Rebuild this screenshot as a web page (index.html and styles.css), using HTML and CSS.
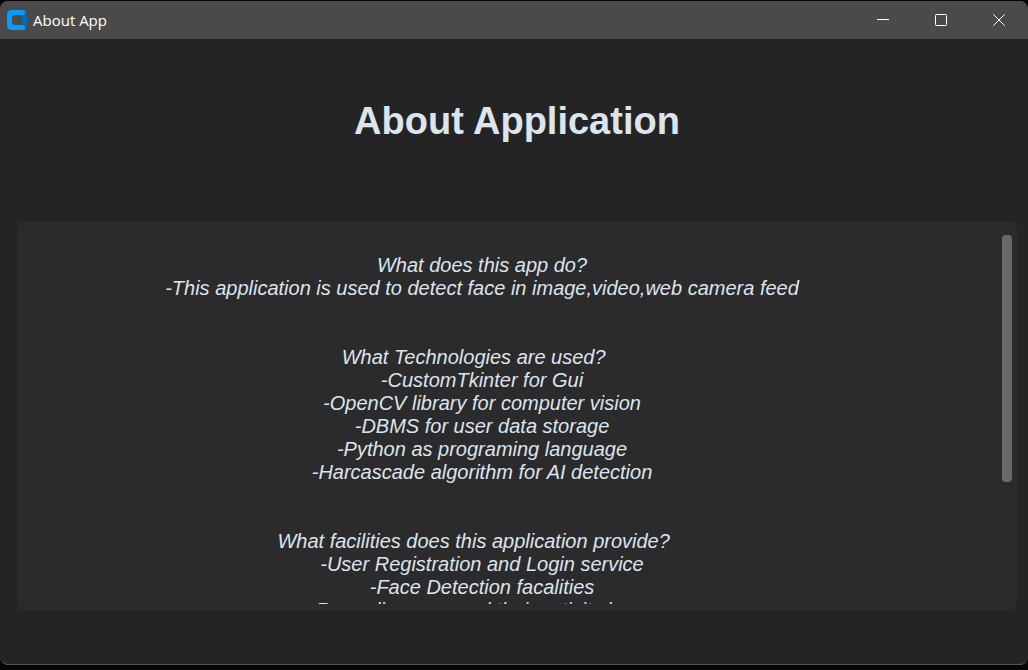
FILE: index.html
```html
<!DOCTYPE html>
<html lang="en">
<head>
<meta charset="utf-8">
<title>About App</title>
<link rel="stylesheet" href="styles.css">
</head>
<body>
<div class="window">
  <header class="titlebar">
    <svg class="logo" viewBox="0 0 20 20" aria-hidden="true">
      <path class="logo-shade" d="M12 0h4q4 0 4 4v12q0 4-4 4h-4l3-6V6z"/>
      <path class="logo-front" d="M5 0h10q3 0 3 2.5T15 5H8Q5 5 5 8v4q0 3 3 3h7q3 0 3 2.500T15 20H5q-5 0-5-5V5q0-5 5-5z"/>
    </svg>
    <span class="caption">About App</span>
    <div class="controls">
      <button class="control" type="button" aria-label="Minimize"><svg class="glyph" viewBox="0 0 12 12"><path d="M0 5.5h12"/></svg></button>
      <button class="control" type="button" aria-label="Maximize"><svg class="glyph" viewBox="0 0 12 12"><rect x=".5" y=".5" width="11" height="11" rx="1"/></svg></button>
      <button class="control" type="button" aria-label="Close"><svg class="glyph" viewBox="0 0 12 12"><path d="M.3.3l11.4 11.4M11.7.3L.3 11.7"/></svg></button>
    </div>
  </header>
  <main class="content">
    <h1 class="heading">About Application</h1>
    <section class="panel">
      <div class="viewport">
        <div class="text">What does this app do?
-This application is used to detect face in image,video,web camera feed


What Technologies are used?   
-CustomTkinter for Gui
-OpenCV library for computer vision
-DBMS for user data storage
-Python as programing language
-Harcascade algorithm for AI detection


What facilities does this application provide?   
-User Registration and Login service
-Face Detection facalities
-Recording user and their activity logs  </div>
      </div>
      <div class="scrollbar"><div class="thumb"></div></div>
    </section>
  </main>
</div>
</body>
</html>
```
FILE: styles.css
```css
* { box-sizing: border-box; }
html, body { height: 100%; }
body {
  margin: 0;
  padding: 1px 0 5px;
  background: #060606;
  color: #dce4ee;
  font-family: "Liberation Sans", Arial, sans-serif;
}
.window {
  height: 100%;
  display: flex;
  flex-direction: column;
  overflow: hidden;
  border-bottom: 1px solid #555;
  border-radius: 8px;
  background: #242424;
}
.titlebar {
  flex: none;
  display: flex;
  align-items: center;
  height: 38px;
  padding-left: 7px;
  background: #4c4a48;
  color: #fff;
}
.logo { width: 20px; height: 20px; }
.logo-shade { fill: #0768b8; }
.logo-front { fill: #0a9bff; }
.caption {
  margin-left: 6px;
  font: 15px/20px "Open Sans", "Noto Sans", sans-serif;
}
.controls { display: flex; height: 100%; margin-left: auto; }
.control {
  display: flex;
  align-items: center;
  justify-content: center;
  width: 58px;
  padding: 0;
  border: 0;
  background: none;
  color: inherit;
}
.glyph {
  width: 12px;
  height: 12px;
  fill: none;
  stroke: currentColor;
}
.content {
  flex: 1;
  min-height: 0;
  display: flex;
  flex-direction: column;
  padding: 0 11px 53px 17px;
}
.heading {
  flex: none;
  margin: 60px 0 78px;
  font-size: 38px;
  line-height: 44px;
  text-align: center;
}
.panel {
  flex: 1;
  min-height: 0;
  display: flex;
  padding: 7px 5px 7px 7px;
  border-radius: 8px;
  background: #2b2b2b;
}
.viewport {
  flex: 1;
  min-width: 0;
  overflow: hidden;
  padding: 26px 62px 0 0;
}
.text {
  font-size: 20px;
  font-style: italic;
  line-height: 23px;
  text-align: center;
  white-space: pre;
}
.scrollbar { width: 10px; padding-top: 7px; }
.thumb { height: 67%; border-radius: 4px; background: #696969; }
```
